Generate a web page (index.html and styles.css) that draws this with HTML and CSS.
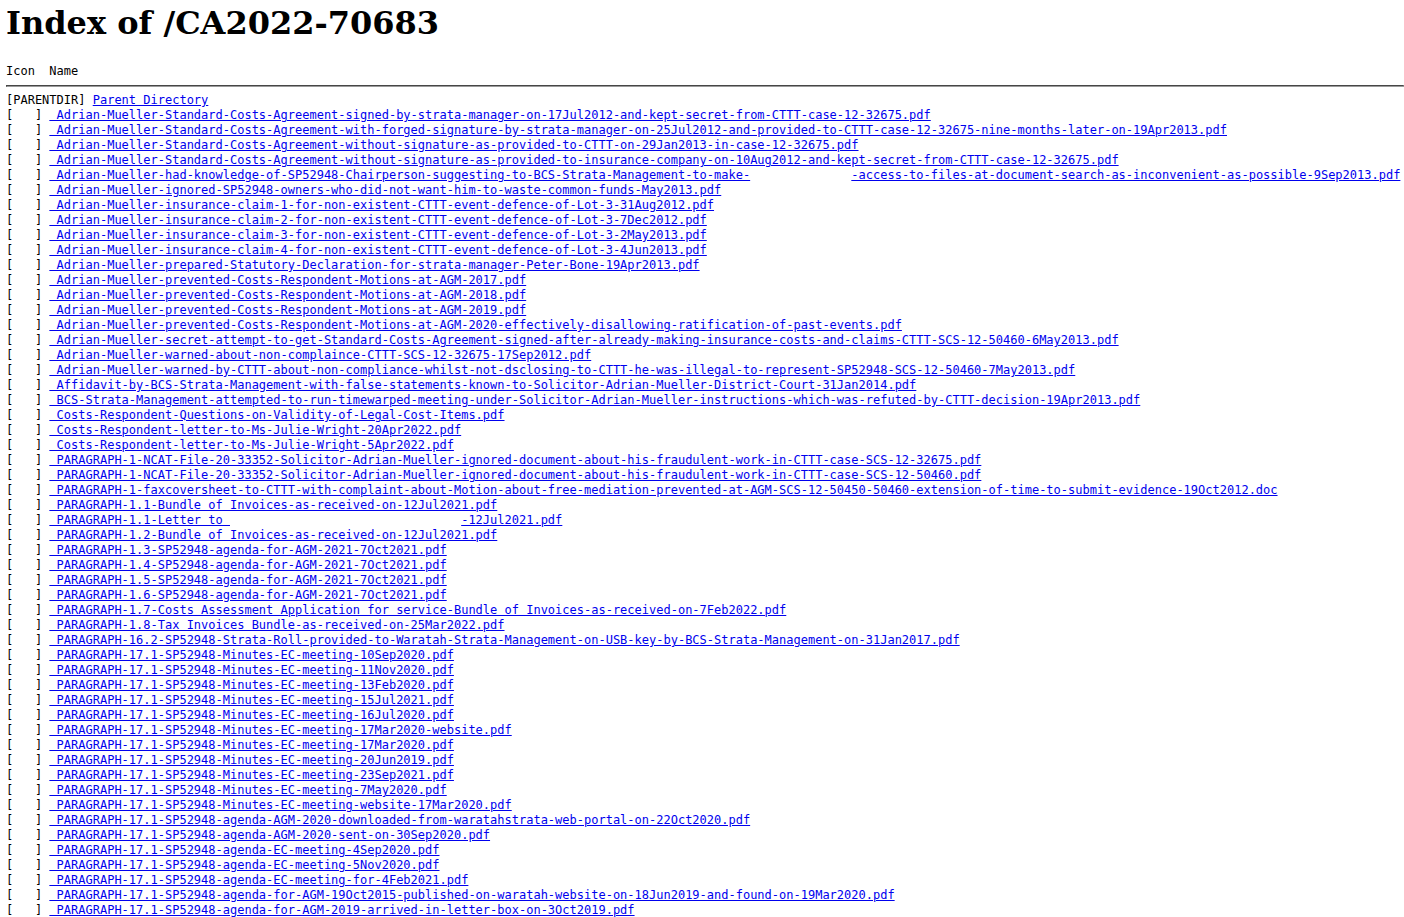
FILE: index.html
```html
<!DOCTYPE html>
<html lang="en">
<head>
  <meta charset="UTF-8">
  <title>Index of /CA2022-70683</title>
  <link rel="stylesheet" href="styles.css">
</head>
<body>

<h1>Index of /CA2022-70683</h1>
<!-- plain directory listing, one row per file -->
<pre class="listing"><span class="icon">Icon </span> Name<hr><span class="icon">[PARENTDIR]</span> <a href="../">Parent Directory</a>
<span class="icon">[   ]</span> <a href="#"> Adrian-Mueller-Standard-Costs-Agreement-signed-by-strata-manager-on-17Jul2012-and-kept-secret-from-CTTT-case-12-32675.pdf</a>
<span class="icon">[   ]</span> <a href="#"> Adrian-Mueller-Standard-Costs-Agreement-with-forged-signature-by-strata-manager-on-25Jul2012-and-provided-to-CTTT-case-12-32675-nine-months-later-on-19Apr2013.pdf</a>
<span class="icon">[   ]</span> <a href="#"> Adrian-Mueller-Standard-Costs-Agreement-without-signature-as-provided-to-CTTT-on-29Jan2013-in-case-12-32675.pdf</a>
<span class="icon">[   ]</span> <a href="#"> Adrian-Mueller-Standard-Costs-Agreement-without-signature-as-provided-to-insurance-company-on-10Aug2012-and-kept-secret-from-CTTT-case-12-32675.pdf</a>
<span class="icon">[   ]</span> <a href="#"> Adrian-Mueller-had-knowledge-of-SP52948-Chairperson-suggesting-to-BCS-Strata-Management-to-make-<span class="gap">              </span>-access-to-files-at-document-search-as-inconvenient-as-possible-9Sep2013.pdf</a>
<span class="icon">[   ]</span> <a href="#"> Adrian-Mueller-ignored-SP52948-owners-who-did-not-want-him-to-waste-common-funds-May2013.pdf</a>
<span class="icon">[   ]</span> <a href="#"> Adrian-Mueller-insurance-claim-1-for-non-existent-CTTT-event-defence-of-Lot-3-31Aug2012.pdf</a>
<span class="icon">[   ]</span> <a href="#"> Adrian-Mueller-insurance-claim-2-for-non-existent-CTTT-event-defence-of-Lot-3-7Dec2012.pdf</a>
<span class="icon">[   ]</span> <a href="#"> Adrian-Mueller-insurance-claim-3-for-non-existent-CTTT-event-defence-of-Lot-3-2May2013.pdf</a>
<span class="icon">[   ]</span> <a href="#"> Adrian-Mueller-insurance-claim-4-for-non-existent-CTTT-event-defence-of-Lot-3-4Jun2013.pdf</a>
<span class="icon">[   ]</span> <a href="#"> Adrian-Mueller-prepared-Statutory-Declaration-for-strata-manager-Peter-Bone-19Apr2013.pdf</a>
<span class="icon">[   ]</span> <a href="#"> Adrian-Mueller-prevented-Costs-Respondent-Motions-at-AGM-2017.pdf</a>
<span class="icon">[   ]</span> <a href="#"> Adrian-Mueller-prevented-Costs-Respondent-Motions-at-AGM-2018.pdf</a>
<span class="icon">[   ]</span> <a href="#"> Adrian-Mueller-prevented-Costs-Respondent-Motions-at-AGM-2019.pdf</a>
<span class="icon">[   ]</span> <a href="#"> Adrian-Mueller-prevented-Costs-Respondent-Motions-at-AGM-2020-effectively-disallowing-ratification-of-past-events.pdf</a>
<span class="icon">[   ]</span> <a href="#"> Adrian-Mueller-secret-attempt-to-get-Standard-Costs-Agreement-signed-after-already-making-insurance-costs-and-claims-CTTT-SCS-12-50460-6May2013.pdf</a>
<span class="icon">[   ]</span> <a href="#"> Adrian-Mueller-warned-about-non-complaince-CTTT-SCS-12-32675-17Sep2012.pdf</a>
<span class="icon">[   ]</span> <a href="#"> Adrian-Mueller-warned-by-CTTT-about-non-compliance-whilst-not-dsclosing-to-CTTT-he-was-illegal-to-represent-SP52948-SCS-12-50460-7May2013.pdf</a>
<span class="icon">[   ]</span> <a href="#"> Affidavit-by-BCS-Strata-Management-with-false-statements-known-to-Solicitor-Adrian-Mueller-District-Court-31Jan2014.pdf</a>
<span class="icon">[   ]</span> <a href="#"> BCS-Strata-Management-attempted-to-run-timewarped-meeting-under-Solicitor-Adrian-Mueller-instructions-which-was-refuted-by-CTTT-decision-19Apr2013.pdf</a>
<span class="icon">[   ]</span> <a href="#"> Costs-Respondent-Questions-on-Validity-of-Legal-Cost-Items.pdf</a>
<span class="icon">[   ]</span> <a href="#"> Costs-Respondent-letter-to-Ms-Julie-Wright-20Apr2022.pdf</a>
<span class="icon">[   ]</span> <a href="#"> Costs-Respondent-letter-to-Ms-Julie-Wright-5Apr2022.pdf</a>
<span class="icon">[   ]</span> <a href="#"> PARAGRAPH-1-NCAT-File-20-33352-Solicitor-Adrian-Mueller-ignored-document-about-his-fraudulent-work-in-CTTT-case-SCS-12-32675.pdf</a>
<span class="icon">[   ]</span> <a href="#"> PARAGRAPH-1-NCAT-File-20-33352-Solicitor-Adrian-Mueller-ignored-document-about-his-fraudulent-work-in-CTTT-case-SCS-12-50460.pdf</a>
<span class="icon">[   ]</span> <a href="#"> PARAGRAPH-1-faxcoversheet-to-CTTT-with-complaint-about-Motion-about-free-mediation-prevented-at-AGM-SCS-12-50450-50460-extension-of-time-to-submit-evidence-19Oct2012.doc</a>
<span class="icon">[   ]</span> <a href="#"> PARAGRAPH-1.1-Bundle of Invoices-as-received-on-12Jul2021.pdf</a>
<span class="icon">[   ]</span> <a href="#"> PARAGRAPH-1.1-Letter to <span class="gap">                                </span>-12Jul2021.pdf</a>
<span class="icon">[   ]</span> <a href="#"> PARAGRAPH-1.2-Bundle of Invoices-as-received-on-12Jul2021.pdf</a>
<span class="icon">[   ]</span> <a href="#"> PARAGRAPH-1.3-SP52948-agenda-for-AGM-2021-7Oct2021.pdf</a>
<span class="icon">[   ]</span> <a href="#"> PARAGRAPH-1.4-SP52948-agenda-for-AGM-2021-7Oct2021.pdf</a>
<span class="icon">[   ]</span> <a href="#"> PARAGRAPH-1.5-SP52948-agenda-for-AGM-2021-7Oct2021.pdf</a>
<span class="icon">[   ]</span> <a href="#"> PARAGRAPH-1.6-SP52948-agenda-for-AGM-2021-7Oct2021.pdf</a>
<span class="icon">[   ]</span> <a href="#"> PARAGRAPH-1.7-Costs Assessment Application for service-Bundle of Invoices-as-received-on-7Feb2022.pdf</a>
<span class="icon">[   ]</span> <a href="#"> PARAGRAPH-1.8-Tax Invoices Bundle-as-received-on-25Mar2022.pdf</a>
<span class="icon">[   ]</span> <a href="#"> PARAGRAPH-16.2-SP52948-Strata-Roll-provided-to-Waratah-Strata-Management-on-USB-key-by-BCS-Strata-Management-on-31Jan2017.pdf</a>
<span class="icon">[   ]</span> <a href="#"> PARAGRAPH-17.1-SP52948-Minutes-EC-meeting-10Sep2020.pdf</a>
<span class="icon">[   ]</span> <a href="#"> PARAGRAPH-17.1-SP52948-Minutes-EC-meeting-11Nov2020.pdf</a>
<span class="icon">[   ]</span> <a href="#"> PARAGRAPH-17.1-SP52948-Minutes-EC-meeting-13Feb2020.pdf</a>
<span class="icon">[   ]</span> <a href="#"> PARAGRAPH-17.1-SP52948-Minutes-EC-meeting-15Jul2021.pdf</a>
<span class="icon">[   ]</span> <a href="#"> PARAGRAPH-17.1-SP52948-Minutes-EC-meeting-16Jul2020.pdf</a>
<span class="icon">[   ]</span> <a href="#"> PARAGRAPH-17.1-SP52948-Minutes-EC-meeting-17Mar2020-website.pdf</a>
<span class="icon">[   ]</span> <a href="#"> PARAGRAPH-17.1-SP52948-Minutes-EC-meeting-17Mar2020.pdf</a>
<span class="icon">[   ]</span> <a href="#"> PARAGRAPH-17.1-SP52948-Minutes-EC-meeting-20Jun2019.pdf</a>
<span class="icon">[   ]</span> <a href="#"> PARAGRAPH-17.1-SP52948-Minutes-EC-meeting-23Sep2021.pdf</a>
<span class="icon">[   ]</span> <a href="#"> PARAGRAPH-17.1-SP52948-Minutes-EC-meeting-7May2020.pdf</a>
<span class="icon">[   ]</span> <a href="#"> PARAGRAPH-17.1-SP52948-Minutes-EC-meeting-website-17Mar2020.pdf</a>
<span class="icon">[   ]</span> <a href="#"> PARAGRAPH-17.1-SP52948-agenda-AGM-2020-downloaded-from-waratahstrata-web-portal-on-22Oct2020.pdf</a>
<span class="icon">[   ]</span> <a href="#"> PARAGRAPH-17.1-SP52948-agenda-AGM-2020-sent-on-30Sep2020.pdf</a>
<span class="icon">[   ]</span> <a href="#"> PARAGRAPH-17.1-SP52948-agenda-EC-meeting-4Sep2020.pdf</a>
<span class="icon">[   ]</span> <a href="#"> PARAGRAPH-17.1-SP52948-agenda-EC-meeting-5Nov2020.pdf</a>
<span class="icon">[   ]</span> <a href="#"> PARAGRAPH-17.1-SP52948-agenda-EC-meeting-for-4Feb2021.pdf</a>
<span class="icon">[   ]</span> <a href="#"> PARAGRAPH-17.1-SP52948-agenda-for-AGM-19Oct2015-published-on-waratah-website-on-18Jun2019-and-found-on-19Mar2020.pdf</a>
<span class="icon">[   ]</span> <a href="#"> PARAGRAPH-17.1-SP52948-agenda-for-AGM-2019-arrived-in-letter-box-on-3Oct2019.pdf</a>
</pre>

</body>
</html>
```

FILE: styles.css
```css
/* Plain server index look */
body {
  margin: 0 0 8px 6px;
  font-family: "DejaVu Serif", serif;
  color: #000;
}

h1 {
  font-family: "DejaVu Serif", serif;
  font-size: 32px;
  font-weight: bold;
  margin: 4px 0 22px;
}

.listing {
  font-family: "DejaVu Sans Mono", monospace;
  font-size: 12px;
  line-height: 15px;
  margin: 0;
}

.listing hr {
  margin: 6px 0;
  border: 1px inset #9a9a9a;
}

/* blanked-out part of a file name */
.gap {
  display: inline-block;
}
```
